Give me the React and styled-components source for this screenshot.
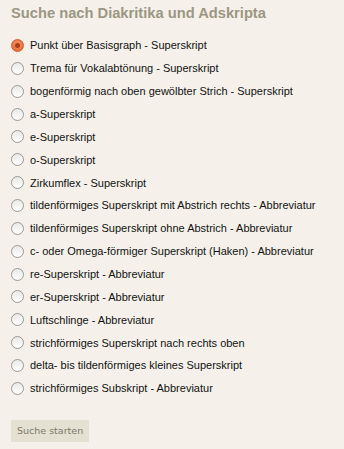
import React, { useState } from "react"
import styled, { createGlobalStyle } from "styled-components"

const options = [
  "Punkt über Basisgraph - Superskript",
  "Trema für Vokalabtönung - Superskript",
  "bogenförmig nach oben gewölbter Strich - Superskript",
  "a-Superskript",
  "e-Superskript",
  "o-Superskript",
  "Zirkumflex - Superskript",
  "tildenförmiges Superskript mit Abstrich rechts - Abbreviatur",
  "tildenförmiges Superskript ohne Abstrich - Abbreviatur",
  "c- oder Omega-förmiger Superskript (Haken) - Abbreviatur",
  "re-Superskript - Abbreviatur",
  "er-Superskript - Abbreviatur",
  "Luftschlinge - Abbreviatur",
  "strichförmiges Superskript nach rechts oben",
  "delta- bis tildenförmiges kleines Superskript",
  "strichförmiges Subskript - Abbreviatur",
]

const App = () => {
  const [selected, setSelected] = useState(0)

  return (
    <>
      <GlobalStyle />
      <Panel>
        <Title>Suche nach Diakritika und Adskripta</Title>
        <List>
          {options.map((label, index) => (
            <Option key={index} onClick={() => setSelected(index)}>
              <Radio checked={selected === index} />
              <span>{label}</span>
            </Option>
          ))}
        </List>
        <Button type="button">Suche starten</Button>
      </Panel>
    </>
  )
}

const GlobalStyle = createGlobalStyle`
  html, body {
    margin: 0;
    background: #f5f1ea;
  }
`

const Panel = styled.div`
  width: 344px;
  height: 449px;
  box-sizing: border-box;
  padding: 4px 11px 0 11px;
  background: #f5f1ea;
  font-family: "Liberation Sans", Arial, sans-serif;
`

const Title = styled.h2`
  margin: 0;
  font-size: 14.7px;
  font-weight: bold;
  color: #9b9784;
  line-height: 18px;
`

const List = styled.div`
  display: flex;
  flex-direction: column;
  margin-top: 12px;
`

const Option = styled.label`
  display: flex;
  align-items: center;
  height: 22.87px;
  font-size: 11px;
  color: #111;
  cursor: pointer;
`

const Radio = styled.span`
  box-sizing: border-box;
  width: 13px;
  height: 13px;
  margin-right: 6px;
  border-radius: 50%;
  flex-shrink: 0;
  position: relative;
  border: 1px solid ${({ checked }) => (checked ? "#d25a2a" : "#9a9a94")};
  background: ${({ checked }) =>
    checked
      ? "radial-gradient(circle at 50% 40%, #f59a6c 0%, #e8703c 70%)"
      : "linear-gradient(#e8e8e6, #ffffff)"};
  &::after {
    content: "";
    display: ${({ checked }) => (checked ? "block" : "none")};
    position: absolute;
    left: 3px;
    top: 3px;
    width: 5px;
    height: 5px;
    border-radius: 50%;
    background: #a83e18;
  }
`

const Button = styled.button`
  display: block;
  margin-top: 20px;
  border: none;
  padding: 0 6px;
  height: 22px;
  white-space: nowrap;
  background: #e4e0d2;
  color: #7c7a68;
  font-family: "DejaVu Sans", "Open Sans", sans-serif;
  font-size: 9.5px;
  cursor: pointer;
`

export default App
